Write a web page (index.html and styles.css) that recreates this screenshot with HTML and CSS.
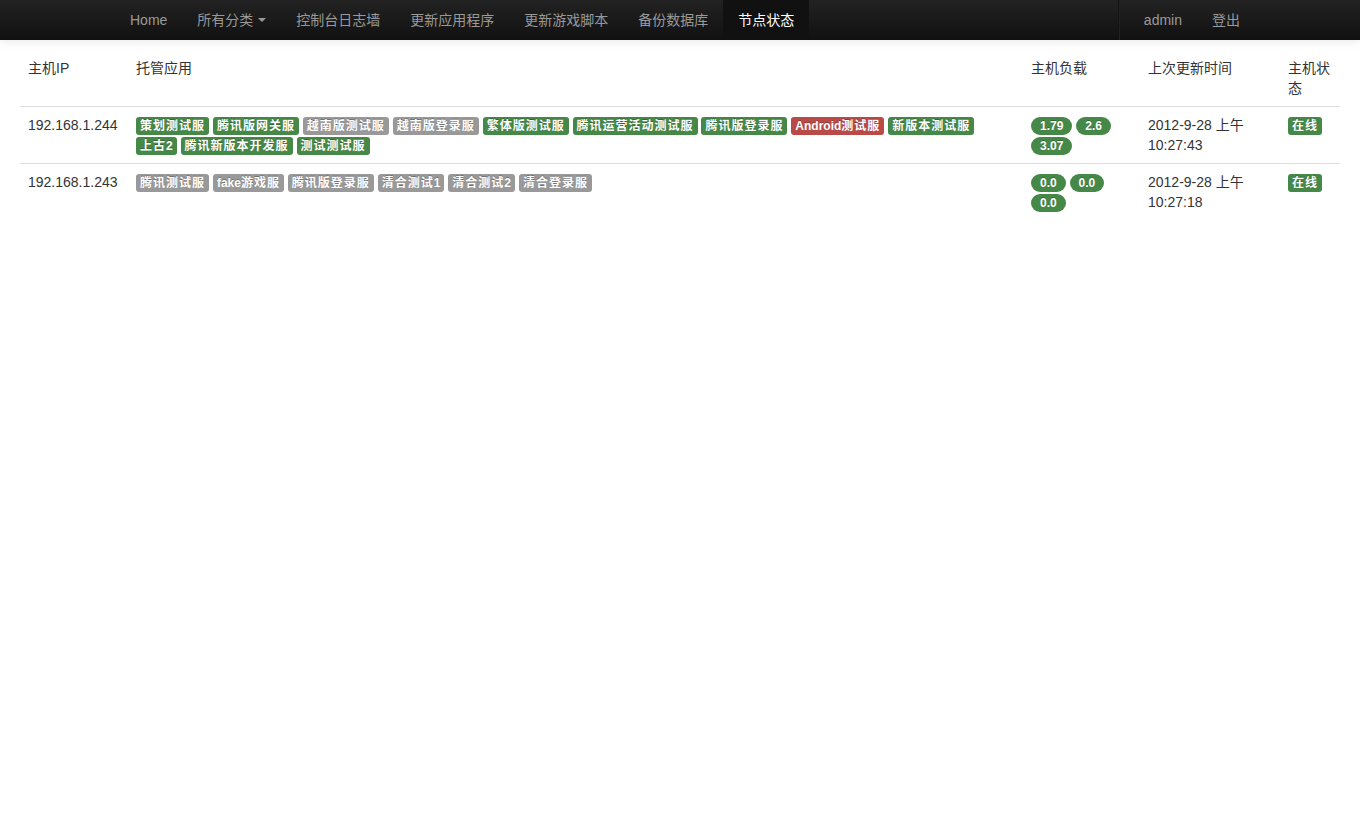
FILE: index.html
```html
<!DOCTYPE html>
<html lang="zh-CN">
<head>
<meta charset="utf-8">
<title>节点状态</title>
<link rel="stylesheet" href="styles.css">
</head>
<body>
<div class="navbar">
  <div class="container">
    <ul class="nav">
      <li><a href="#">Home</a></li>
      <li><a href="#">所有分类 <b class="caret"></b></a></li>
      <li><a href="#">控制台日志墙</a></li>
      <li><a href="#">更新应用程序</a></li>
      <li><a href="#">更新游戏脚本</a></li>
      <li><a href="#">备份数据库</a></li>
      <li class="active"><a href="#">节点状态</a></li>
    </ul>
    <ul class="nav nav-right">
      <li class="divider-vertical"></li>
      <li><a href="#">admin</a></li>
      <li><a href="#">登出</a></li>
    </ul>
  </div>
</div>
<div class="main">
  <table class="table">
    <colgroup>
      <col class="c-ip"><col class="c-apps"><col class="c-load"><col class="c-time"><col class="c-state">
    </colgroup>
    <tr>
      <th>主机IP</th>
      <th>托管应用</th>
      <th>主机负载</th>
      <th>上次更新时间</th>
      <th>主机状态</th>
    </tr>
    <tr>
      <td>192.168.1.244</td>
      <td>
        <span class="label ok">策划测试服</span>
        <span class="label ok">腾讯版网关服</span>
        <span class="label off">越南版测试服</span>
        <span class="label off">越南版登录服</span>
        <span class="label ok">繁体版测试服</span>
        <span class="label ok">腾讯运营活动测试服</span>
        <span class="label ok">腾讯版登录服</span>
        <span class="label bad"><span class="en">Android</span>测试服</span>
        <span class="label ok">新版本测试服</span>
        <span class="label ok">上古<span class="en">2</span></span>
        <span class="label ok">腾讯新版本开发服</span>
        <span class="label ok">测试测试服</span>
      </td>
      <td>
        <span class="badge">1.79</span>
        <span class="badge">2.6</span>
        <span class="badge">3.07</span>
      </td>
      <td>2012-9-28 上午 10:27:43</td>
      <td><span class="label ok">在线</span></td>
    </tr>
    <tr>
      <td>192.168.1.243</td>
      <td>
        <span class="label off">腾讯测试服</span>
        <span class="label off"><span class="en">fake</span>游戏服</span>
        <span class="label off">腾讯版登录服</span>
        <span class="label off">清合测试<span class="en">1</span></span>
        <span class="label off">清合测试<span class="en">2</span></span>
        <span class="label off">清合登录服</span>
      </td>
      <td>
        <span class="badge">0.0</span>
        <span class="badge">0.0</span>
        <span class="badge">0.0</span>
      </td>
      <td>2012-9-28 上午 10:27:18</td>
      <td><span class="label ok">在线</span></td>
    </tr>
  </table>
</div>
</body>
</html>
```
FILE: styles.css
```css
* {
  box-sizing: border-box;
}

body {
  margin: 0;
  background: #fff;
  color: #333;
  font-family: "Liberation Sans", "Noto Sans CJK SC", sans-serif;
  font-size: 14px;
  line-height: 20px;
}

.navbar {
  height: 40px;
  background: linear-gradient(to bottom, #222 0%, #111 100%);
  box-shadow: 0 1px 10px rgba(0, 0, 0, 0.1);
}

.container {
  width: 1170px;
  margin: 0 auto;
  padding-left: 20px;
  padding-right: 10px;
  display: flex;
  justify-content: space-between;
}

.nav {
  list-style: none;
  margin: 0;
  padding: 0;
  display: flex;
}

.nav a {
  display: block;
  padding: 10px 15px;
  color: #999;
  text-decoration: none;
  line-height: 20px;
}

.nav .active a {
  background: #111;
  color: #fff;
}

.caret {
  display: inline-block;
  width: 0;
  height: 0;
  vertical-align: top;
  margin-top: 8px;
  margin-left: 1px;
  border-top: 4px solid #999;
  border-left: 4px solid transparent;
  border-right: 4px solid transparent;
}

.divider-vertical {
  height: 40px;
  margin: 0 9px;
  border-left: 1px solid #111;
  border-right: 1px solid #222;
}

.main {
  padding: 10px 20px 0;
}

.table {
  width: 100%;
  border-collapse: collapse;
  table-layout: fixed;
}

.c-ip { width: 108px; }
.c-apps { width: 895px; }
.c-load { width: 117px; }
.c-time { width: 140px; }
.c-state { width: 60px; }

.table th,
.table td {
  padding: 8px;
  text-align: left;
  vertical-align: top;
  border-top: 1px solid #ddd;
  font-weight: normal;
  line-height: 20px;
}

.table tr:first-child th {
  border-top: 0;
}

.label,
.badge {
  display: inline-block;
  font-size: 12px;
  font-weight: bold;
  line-height: 14px;
  color: #fff;
  white-space: nowrap;
  vertical-align: baseline;
  text-shadow: 0 -1px 0 rgba(0, 0, 0, 0.25);
}

.label {
  padding: 2px 4px;
  border-radius: 3px;
  letter-spacing: 1px;
}

.label .en {
  letter-spacing: 0;
}

.badge {
  padding: 2px 9px;
  border-radius: 9px;
  background: #468847;
}

.ok { background: #468847; }
.off { background: #999; }
.bad { background: #b94a48; }
```
